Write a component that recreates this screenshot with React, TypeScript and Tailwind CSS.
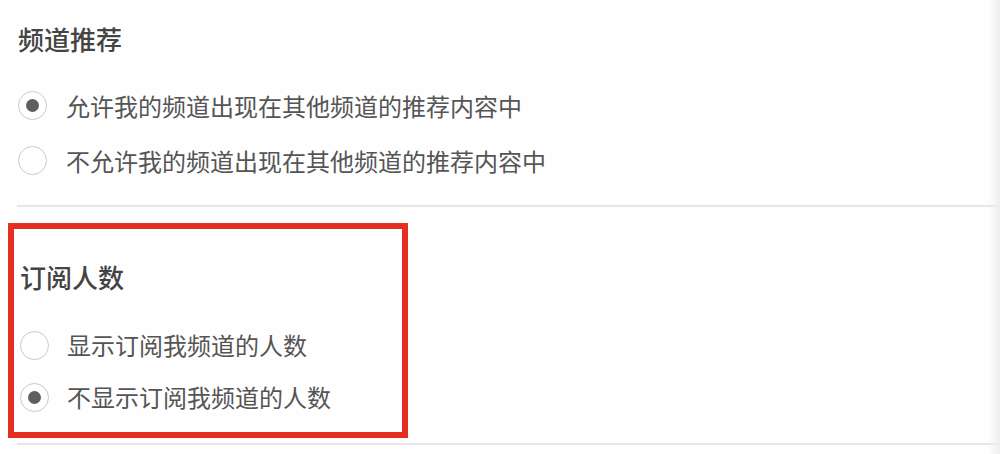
import React from "react";

function Radio({ checked }: { checked?: boolean }) {
  return (
    <span className="flex h-[29px] w-[29px] shrink-0 items-center justify-center rounded-full border-[1.5px] border-[#c9c9c9] bg-white">
      {checked && <span className="block h-[13px] w-[13px] rounded-full bg-[#5f5f5f]" />}
    </span>
  );
}

function Option({ label, checked, h, gap }: { label: string; checked?: boolean; h: string; gap: string }) {
  return (
    <div className={`flex items-center ${h} ${gap}`}>
      <Radio checked={checked} />
      <span className="text-[24px] leading-[32px] text-[#555555]">{label}</span>
    </div>
  );
}

export default function App() {
  return (
    <div
      className="relative h-[454px] w-[1000px] overflow-hidden bg-[#fefefe]"
      style={{ fontFamily: '"Noto Sans CJK SC", "Noto Sans", sans-serif' }}
    >
      <div className="flex flex-col pt-[23px]">
        <section className="flex flex-col pl-[18px]">
          <h2 className="h-[32px] text-[26px] font-medium leading-[32px] text-[#444444]">频道推荐</h2>
          <div className="mt-[23px] flex flex-col">
            <Option h="h-[55px]" gap="gap-[19px]" checked label="允许我的频道出现在其他频道的推荐内容中" />
            <Option h="h-[55px]" gap="gap-[19px]" label="不允许我的频道出现在其他频道的推荐内容中" />
          </div>
        </section>
        <div className="ml-[17px] mt-[17px] h-[2px] bg-[#e6e6e6]" />
        <section className="flex flex-col pl-[20px] pt-[54px]">
          <h2 className="h-[32px] text-[26px] font-medium leading-[32px] text-[#444444]">订阅人数</h2>
          <div className="mt-[26px] flex flex-col">
            <Option h="h-[52px]" gap="gap-[18px]" label="显示订阅我频道的人数" />
            <Option h="h-[52px]" gap="gap-[18px]" checked label="不显示订阅我频道的人数" />
          </div>
        </section>
        <div className="ml-[17px] mt-[20px] h-[2px] bg-[#e6e6e6]" />
      </div>

      {/* annotation box */}
      <div className="pointer-events-none absolute left-[8px] top-[223px] h-[215px] w-[400px] border-[6px] border-[#e5301f]" />
      {/* right edge shading */}
      <div className="pointer-events-none absolute right-0 top-0 h-full w-[12px] bg-gradient-to-r from-transparent to-[#efefef]" />
    </div>
  );
}
